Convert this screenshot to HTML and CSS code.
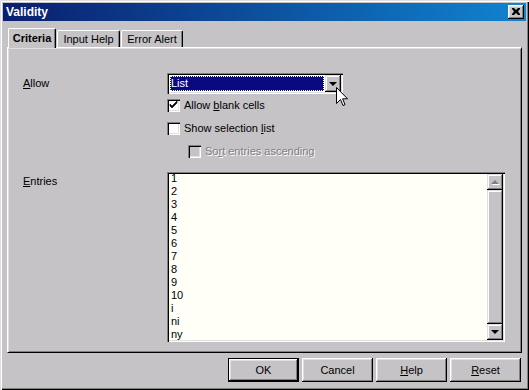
FILE: index.html
```html
<!DOCTYPE html>
<html>
<head>
<meta charset="utf-8">
<link rel="stylesheet" href="styles.css">
</head>
<body>
<div class="window">
  <div class="titlebar">
    <span class="title">Validity</span>
    <span class="close">
      <svg width="8" height="7" viewBox="0 0 8 7"><path d="M0 0h2l2 2 2-2h2v1l-2 2.5 2 2.5v1h-2l-2-2-2 2h-2v-1l2-2.5-2-2.5z" fill="#000"/></svg>
    </span>
  </div>
  <div class="client">
    <div class="tabs">
      <div class="tab tab-active tab-criteria">Criteria</div>
      <div class="tab tab-input">Input Help</div>
      <div class="tab tab-error">Error Alert</div>
    </div>
    <div class="panel">
      <div class="label label-allow"><u>A</u>llow</div>
      <div class="controls">
        <div class="combo">
          <div class="combo-value"><span>List</span></div>
          <div class="combo-btn"><span class="tri-down"></span></div>
          <svg class="cursor" width="12" height="20" viewBox="0 0 12 20"><path d="M0.5 0.5 L0.5 16.5 L4.5 12.5 L7 18.5 L9 17.7 L6.6 11.8 L11.5 11.8 Z" fill="#fff" stroke="#000" stroke-width="1"/></svg>
        </div>
        <div class="checks">
          <div class="check-row">
            <span class="cb">
              <svg width="9" height="9" viewBox="0 0 9 9"><path d="M1 3v2l2 2 5-5v-2l-5 5z" fill="#000" stroke="#000" stroke-width="0.6"/></svg>
            </span>
            <span>Allow <u>b</u>lank cells</span>
          </div>
          <div class="check-row">
            <span class="cb"></span>
            <span>Show selection <u>l</u>ist</span>
          </div>
          <div class="check-row disabled">
            <span class="cb cb-disabled"></span>
            <span class="dim-text">So<u>r</u>t entries ascending</span>
          </div>
        </div>
      </div>
      <div class="label label-entries"><u>E</u>ntries</div>
      <div class="listbox">
        <div class="items">
          <div>1</div><div>2</div><div>3</div><div>4</div><div>5</div><div>6</div><div>7</div><div>8</div><div>9</div><div>10</div><div>i</div><div>ni</div><div>ny</div>
        </div>
        <div class="scrollbar">
          <div class="sb-btn"><span class="tri-up-dim"></span></div>
          <div class="sb-thumb"></div>
          <div class="sb-btn"><span class="tri-down"></span></div>
        </div>
      </div>
    </div>
    <div class="buttons">
      <div class="btn btn-default">OK</div>
      <div class="btn">Cancel</div>
      <div class="btn"><span><u>H</u>elp</span></div>
      <div class="btn"><span><u>R</u>eset</span></div>
    </div>
  </div>
</div>
</body>
</html>
```
FILE: styles.css
```css
* { box-sizing: border-box; }
html, body { margin: 0; padding: 0; }
body {
  font-family: "Liberation Sans", Arial, sans-serif;
  font-size: 11px;
  color: #000;
  background: #c5c3c6;
}
u { text-decoration: underline; text-underline-offset: 1px; }

.window {
  width: 529px;
  height: 390px;
  padding: 3px;
  background: #c5c3c6;
  box-shadow: inset 1px 1px #dfdfdf, inset 2px 2px #fff, inset -1px -1px #000, inset -2px -2px #808080;
  display: flex;
  flex-direction: column;
}

.titlebar {
  height: 18px;
  flex: none;
  display: flex;
  align-items: center;
  justify-content: space-between;
  padding: 0 2px 0 3px;
  background: linear-gradient(to right, #0a1e6e, #1084d0);
}
.title {
  color: #fff;
  font-weight: bold;
  font-size: 12px;
}
.close {
  width: 16px;
  height: 14px;
  background: #c5c3c6;
  box-shadow: inset -1px -1px #000, inset 1px 1px #fff, inset -2px -2px #808080, inset 2px 2px #dfdfdf;
  display: flex;
  align-items: center;
  justify-content: center;
  padding-bottom: 1px;
}
.close svg { display: block; }

.client {
  flex: 1;
  display: flex;
  flex-direction: column;
  padding: 7px 4px 0 4px;
}

.tabs {
  height: 19px;
  flex: none;
  display: flex;
  align-items: flex-end;
}
.tab {
  height: 17px;
  margin-left: 1px;
  display: flex;
  align-items: center;
  justify-content: center;
  border-left: 1px solid #fff;
  border-top: 1px solid #fff;
  border-right: 1px solid #000;
  border-radius: 2px 2px 0 0;
  box-shadow: inset -1px 0 #808080;
  background: #c5c3c6;
}
.tab-active {
  height: 20px;
  margin-bottom: -1px;
  position: relative;
  z-index: 1;
  font-weight: bold;
  padding-bottom: 1px;
}
.tab-criteria { width: 48px; margin-left: 1px; }
.tab-input { width: 63px; margin-left: 1px; }
.tab-error { width: 62px; margin-left: 1px; }

.panel {
  height: 306px;
  flex: none;
  border: 1px solid;
  border-color: #fff #000 #000 #fff;
  box-shadow: inset 1px 1px #dfdfdf, inset -1px -1px #808080;
  padding: 25px 15px 0 15px;
  display: grid;
  grid-template-columns: 144px 338px;
  grid-template-rows: auto auto;
  align-content: start;
}

.label-allow { line-height: 21px; }
.label-entries { margin-top: 14px; padding-top: 3px; line-height: 13px; }

.controls { display: flex; flex-direction: column; }

.combo {
  position: relative;
  width: 176px;
  height: 21px;
  background: #fff;
  box-shadow: inset 1px 1px #808080, inset 2px 2px #000, inset -1px -1px #fff, inset -2px -2px #dfdfdf;
  padding: 2px;
  display: flex;
}
.combo-value {
  flex: 1;
  margin: 1px;
  background: #0a0a80;
  color: #fff;
  outline: 1px dotted #fff;
  outline-offset: -1px;
  padding-left: 1px;
  line-height: 15px;
}
.combo-btn {
  width: 16px;
  height: 17px;
  background: #c5c3c6;
  box-shadow: inset -1px -1px #000, inset 1px 1px #dfdfdf, inset -2px -2px #808080, inset 2px 2px #fff;
  display: flex;
  align-items: center;
  justify-content: center;
}
.tri-down {
  width: 0;
  height: 0;
  border-left: 4px solid transparent;
  border-right: 4px solid transparent;
  border-top: 4px solid #000;
}
.tri-up-dim {
  width: 0;
  height: 0;
  border-left: 4px solid transparent;
  border-right: 4px solid transparent;
  border-bottom: 4px solid #808080;
  filter: drop-shadow(1px 1px 0 #fff);
}
.cursor {
  position: absolute;
  left: 169px;
  top: 14px;
}

.checks {
  display: flex;
  flex-direction: column;
  gap: 10px;
  margin-top: 5px;
}
.check-row {
  height: 13px;
  line-height: 13px;
  display: flex;
  align-items: center;
  gap: 4px;
}
.check-row.disabled { margin-left: 21px; }
.cb {
  width: 13px;
  height: 13px;
  flex: none;
  background: #fff;
  box-shadow: inset 1px 1px #808080, inset 2px 2px #000, inset -1px -1px #fff, inset -2px -2px #dfdfdf;
  display: flex;
  align-items: center;
  justify-content: center;
}
.cb svg { display: block; }
.cb-disabled { background: #c5c3c6; }
.dim-text {
  color: #808080;
  text-shadow: 1px 1px 0 #fff;
}

.listbox {
  margin-top: 14px;
  height: 170px;
  display: flex;
  background: #fffff7;
  box-shadow: inset 1px 1px #808080, inset 2px 2px #000, inset -1px -1px #fff, inset -2px -2px #dfdfdf;
  padding: 2px;
}
.items {
  flex: 1;
  overflow: hidden;
  padding-left: 2px;
  line-height: 13px;
  margin-top: -2px;
}
.scrollbar {
  width: 16px;
  flex: none;
  display: flex;
  flex-direction: column;
  background: #e0e0e0;
}
.sb-btn {
  height: 16px;
  flex: none;
  background: #c5c3c6;
  box-shadow: inset -1px -1px #000, inset 1px 1px #dfdfdf, inset -2px -2px #808080, inset 2px 2px #fff;
  display: flex;
  align-items: center;
  justify-content: center;
}
.sb-thumb {
  flex: 1;
  background: #c5c3c6;
  box-shadow: inset -1px -1px #000, inset 1px 1px #dfdfdf, inset -2px -2px #808080, inset 2px 2px #fff;
}

.buttons {
  display: flex;
  justify-content: flex-end;
  gap: 3px;
  margin-top: 5px;
  padding-right: 1px;
}
.btn {
  width: 71px;
  height: 24px;
  background: #c5c3c6;
  box-shadow: inset -1px -1px #000, inset 1px 1px #fff, inset -2px -2px #808080, inset 2px 2px #dfdfdf;
  display: flex;
  align-items: center;
  justify-content: center;
  font-size: 11px;
}
.btn-default {
  border: 1px solid #000;
}
```
